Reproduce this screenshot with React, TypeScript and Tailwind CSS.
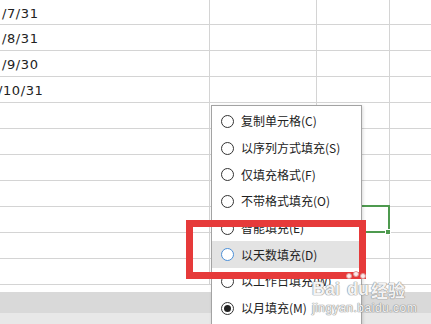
import React from "react";

const dates: { text: string; shift: string }[] = [
  { text: "/7/31", shift: "ml-[2px]" },
  { text: "/8/31", shift: "ml-[2px]" },
  { text: "/9/30", shift: "ml-[2px]" },
  { text: "/10/31", shift: "ml-[-2px]" },
];

const items = [
  { label: "复制单元格(C)" },
  { label: "以序列方式填充(S)" },
  { label: "仅填充格式(F)" },
  { label: "不带格式填充(O)" },
  { label: "智能填充(E)" },
  { label: "以天数填充(D)", hover: true },
  { label: "以工作日填充(W)" },
  { label: "以月填充(M)", checked: true },
];

function Row({ first, children }: { first?: boolean; children?: React.ReactNode }) {
  return (
    <div
      className={`grid grid-cols-[210px_107px_73px_1fr] border-b border-[#d4d4d4] ${
        first ? "h-[25px]" : "h-[26px]"
      }`}
    >
      <div className="border-r border-[#d4d4d4] overflow-hidden flex items-center pt-[3px]">
        {children}
      </div>
      <div className="border-r border-[#d4d4d4]" />
      <div className="border-r border-[#d4d4d4]" />
      <div />
    </div>
  );
}

const wm = "text-white/90 [text-shadow:0_0_1px_#8a8a8a,0_0_1px_#8a8a8a,0_0_1px_#8a8a8a]";

export default function App() {
  const rows = Array.from({ length: 11 }, (_, i) => i);
  return (
    <div
      className="relative w-[431px] h-[324px] overflow-hidden bg-white"
      style={{ fontFamily: '"DejaVu Sans", "Noto Sans CJK SC", sans-serif' }}
    >
      {/* sheet grid */}
      <div className="flex flex-col">
        {rows.map((i) => (
          <Row key={i} first={i === 0}>
            {dates[i] ? (
              <span
                className={`${dates[i].shift} whitespace-nowrap text-[13px] tracking-[0.6px] text-[#222]`}
              >
                {dates[i].text}
              </span>
            ) : null}
          </Row>
        ))}
        <div className="h-[7px]" />
        <div className="h-[21px] bg-[#d9d9d9]" />
        <div className="h-[20px] bg-[#e8e8e8]" />
      </div>

      {/* green cell selection */}
      <div className="absolute left-[314px] top-[205px] w-[76px] h-[28px] border-[2.5px] border-[#4e9a4f]" />
      <div className="absolute left-[385px] top-[229px] w-[6px] h-[6px] bg-[#4e9a4f] border border-white" />

      {/* autofill options menu */}
      <div className="absolute left-[211px] top-[105px] w-[151px] h-[230px] border border-[#a3a3a3] bg-white shadow-[1px_1px_3px_rgba(0,0,0,0.15)] pt-[2px]">
        {items.map((it) => (
          <div
            key={it.label}
            className={`flex items-center h-[26.7px] pl-[9px] ${it.hover ? "bg-[#e3e3e3]" : ""}`}
          >
            <span
              className={`flex items-center justify-center w-[13px] h-[13px] rounded-full border bg-white ${
                it.hover ? "border-[#4a8fd8]" : "border-[#333]"
              }`}
            >
              {it.checked ? <span className="w-[7px] h-[7px] rounded-full bg-[#222]" /> : null}
            </span>
            <span
              className="ml-[7px] text-[12px] text-[#222] whitespace-nowrap"
              style={{ fontFamily: '"Noto Sans CJK SC", sans-serif' }}
            >
              {it.label}
            </span>
          </div>
        ))}
      </div>

      {/* red annotation box */}
      <div className="absolute left-[186px] top-[220px] w-[180px] h-[59px] border-[7px] border-[#e63a3a]" />

      {/* watermark */}
      <div className="absolute left-[312px] top-[280px] pointer-events-none select-none">
        <div className="relative flex items-end">
          <span
            className={`text-[18px] font-bold leading-none ${wm}`}
            style={{ fontFamily: '"Liberation Sans", sans-serif' }}
          >
            Bai
          </span>
          <span
            className={`ml-[7px] text-[18px] font-bold leading-none ${wm}`}
            style={{ fontFamily: '"Liberation Sans", sans-serif' }}
          >
            du
          </span>
          <span
            className={`ml-[2px] text-[17px] font-bold leading-none ${wm}`}
            style={{ fontFamily: '"Noto Sans CJK SC", sans-serif' }}
          >
            经验
          </span>
          <span className="absolute left-[34px] top-[-7px] w-[6px] h-[6px] rounded-full bg-white/90 border border-[#d99]" />
          <span className="absolute left-[41px] top-[-9px] w-[6px] h-[6px] rounded-full bg-white/90 border border-[#d99]" />
          <span className="absolute left-[48px] top-[-7px] w-[6px] h-[6px] rounded-full bg-white/90 border border-[#d99]" />
        </div>
        <div
          className={`mt-[4px] text-[12px] leading-none tracking-[0.5px] ${wm}`}
          style={{ fontFamily: '"Liberation Sans", sans-serif' }}
        >
          jingyan.baidu.com
        </div>
      </div>
    </div>
  );
}
